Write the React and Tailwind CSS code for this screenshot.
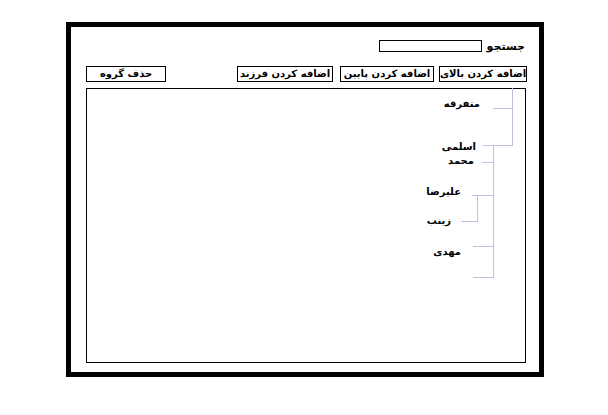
export default function App() {
  const font = { fontFamily: '"DejaVu Sans", sans-serif' };
  const line = "#c4bce6";
  const btn = "h-[16px] border border-black flex items-center justify-center text-[10px] font-bold leading-none text-black whitespace-nowrap";
  const node = "absolute text-[10px] font-bold leading-none text-black whitespace-nowrap";
  return (
    <div className="w-[608px] h-[415px] bg-white overflow-hidden" style={font}>
      <div className="ml-[66px] mt-[22px] w-[478px] h-[355px] border-[5px] border-black flex flex-col pl-[15px] pr-[14px]">
        <div dir="rtl" className="flex items-center gap-[5px] mt-[13px] h-[12px]">
          <span className="text-[11px] font-bold leading-none text-black whitespace-nowrap">جستجو</span>
          <div className="w-[103px] h-[12px] border border-black bg-white"></div>
        </div>
        <div dir="rtl" className="flex items-center mt-[14px] h-[16px]">
          <div className={`w-[88px] mr-[-2px] ${btn}`}>اضافه کردن بالای</div>
          <div className={`w-[94px] mr-[5px] ${btn}`}>اضافه کردن پایین</div>
          <div className={`w-[96px] mr-[7px] ${btn}`}>اضافه کردن فرزند</div>
          <div className="flex-1"></div>
          <div className={`w-[80px] ${btn}`}>حذف گروه</div>
        </div>
        <div className="relative mt-[6px] w-[440px] h-[275px] border border-black">
          <svg className="absolute left-[-1px] top-[-1px]" width="440" height="275">
            <g stroke={line} strokeWidth="1" shapeRendering="crispEdges">
              <line x1="426.5" y1="0" x2="426.5" y2="57" />
              <line x1="407" y1="20.5" x2="427" y2="20.5" />
              <line x1="397" y1="57.5" x2="427" y2="57.5" />
              <line x1="407.5" y1="57" x2="407.5" y2="190" />
              <line x1="396" y1="74.5" x2="408" y2="74.5" />
              <line x1="386" y1="107.5" x2="408" y2="107.5" />
              <line x1="387" y1="158.5" x2="408" y2="158.5" />
              <line x1="387" y1="189.5" x2="408" y2="189.5" />
              <line x1="391.5" y1="107" x2="391.5" y2="134" />
              <line x1="375" y1="133.5" x2="392" y2="133.5" />
            </g>
          </svg>
          <span className={`${node} right-[45px] top-[10px]`}>متفرقه</span>
          <span className={`${node} right-[49px] top-[53px]`}>اسلمی</span>
          <span className={`${node} right-[51px] top-[67px]`}>محمد</span>
          <span className={`${node} right-[64px] top-[98px]`}>علیرضا</span>
          <span className={`${node} right-[74px] top-[127px]`}>زینب</span>
          <span className={`${node} right-[64px] top-[158px]`}>مهدی</span>
        </div>
      </div>
    </div>
  );
}
